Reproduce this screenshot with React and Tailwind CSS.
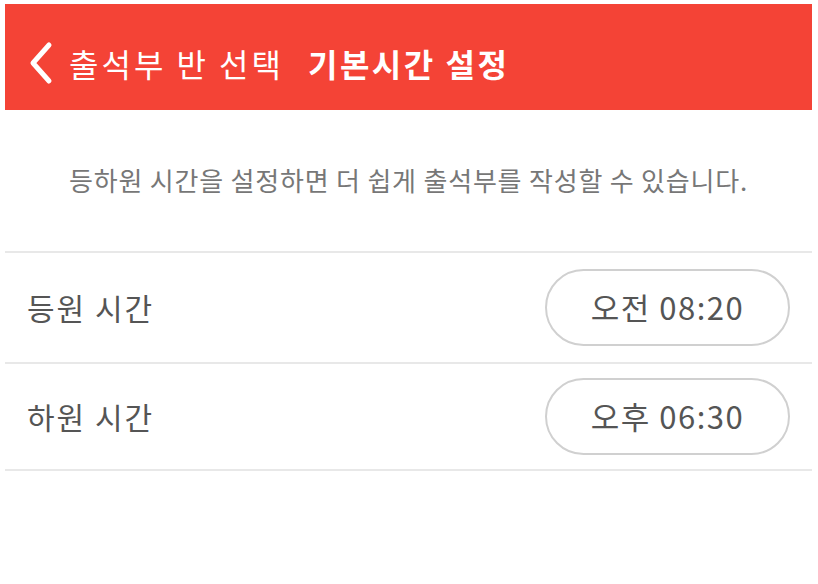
import React from 'react';

const font = { fontFamily: '"Noto Sans CJK KR", "Noto Sans", sans-serif' };

const TimeRow = ({ label, time, h }) => (
  <div className={`flex items-center justify-between ${h} border-b-2 border-[#e8e8e8] pl-[22px] pr-[22px]`}>
    <span className="text-[30px] tracking-[2px] text-[#555]">{label}</span>
    <button className="w-[245px] h-[77px] rounded-full border-2 border-[#d0d0d0] bg-white text-[31px] tracking-[1.5px] text-[#555]">
      {time}
    </button>
  </div>
);

export default function App() {
  return (
    <div className="w-[818px] h-[584px] bg-white pt-[4px] pl-[5px] pr-[6px]" style={font}>
      <div className="h-[106px] bg-[#f44336] flex items-center pt-3 pl-[22px] text-white">
        <svg width="28" height="44" viewBox="0 0 28 44" className="mr-[14px]">
          <path d="M22 4 L6 22 L22 40" fill="none" stroke="white" strokeWidth="5" strokeLinecap="round" strokeLinejoin="round" />
        </svg>
        <span className="text-[32px] tracking-[3px]">출석부 반 선택</span>
        <span className="text-[32px] font-bold tracking-[2.5px] ml-[24px]">기본시간 설정</span>
      </div>
      <div className="h-[143px] flex items-center justify-center border-b-2 border-[#e8e8e8]">
        <p className="text-[26px] tracking-[0.8px] text-[#777] pb-[2px]">등하원 시간을 설정하면 더 쉽게 출석부를 작성할 수 있습니다.</p>
      </div>
      <TimeRow label="등원 시간" time="오전 08:20" h="h-[111px]" />
      <TimeRow label="하원 시간" time="오후 06:30" h="h-[107px]" />
    </div>
  );
}
